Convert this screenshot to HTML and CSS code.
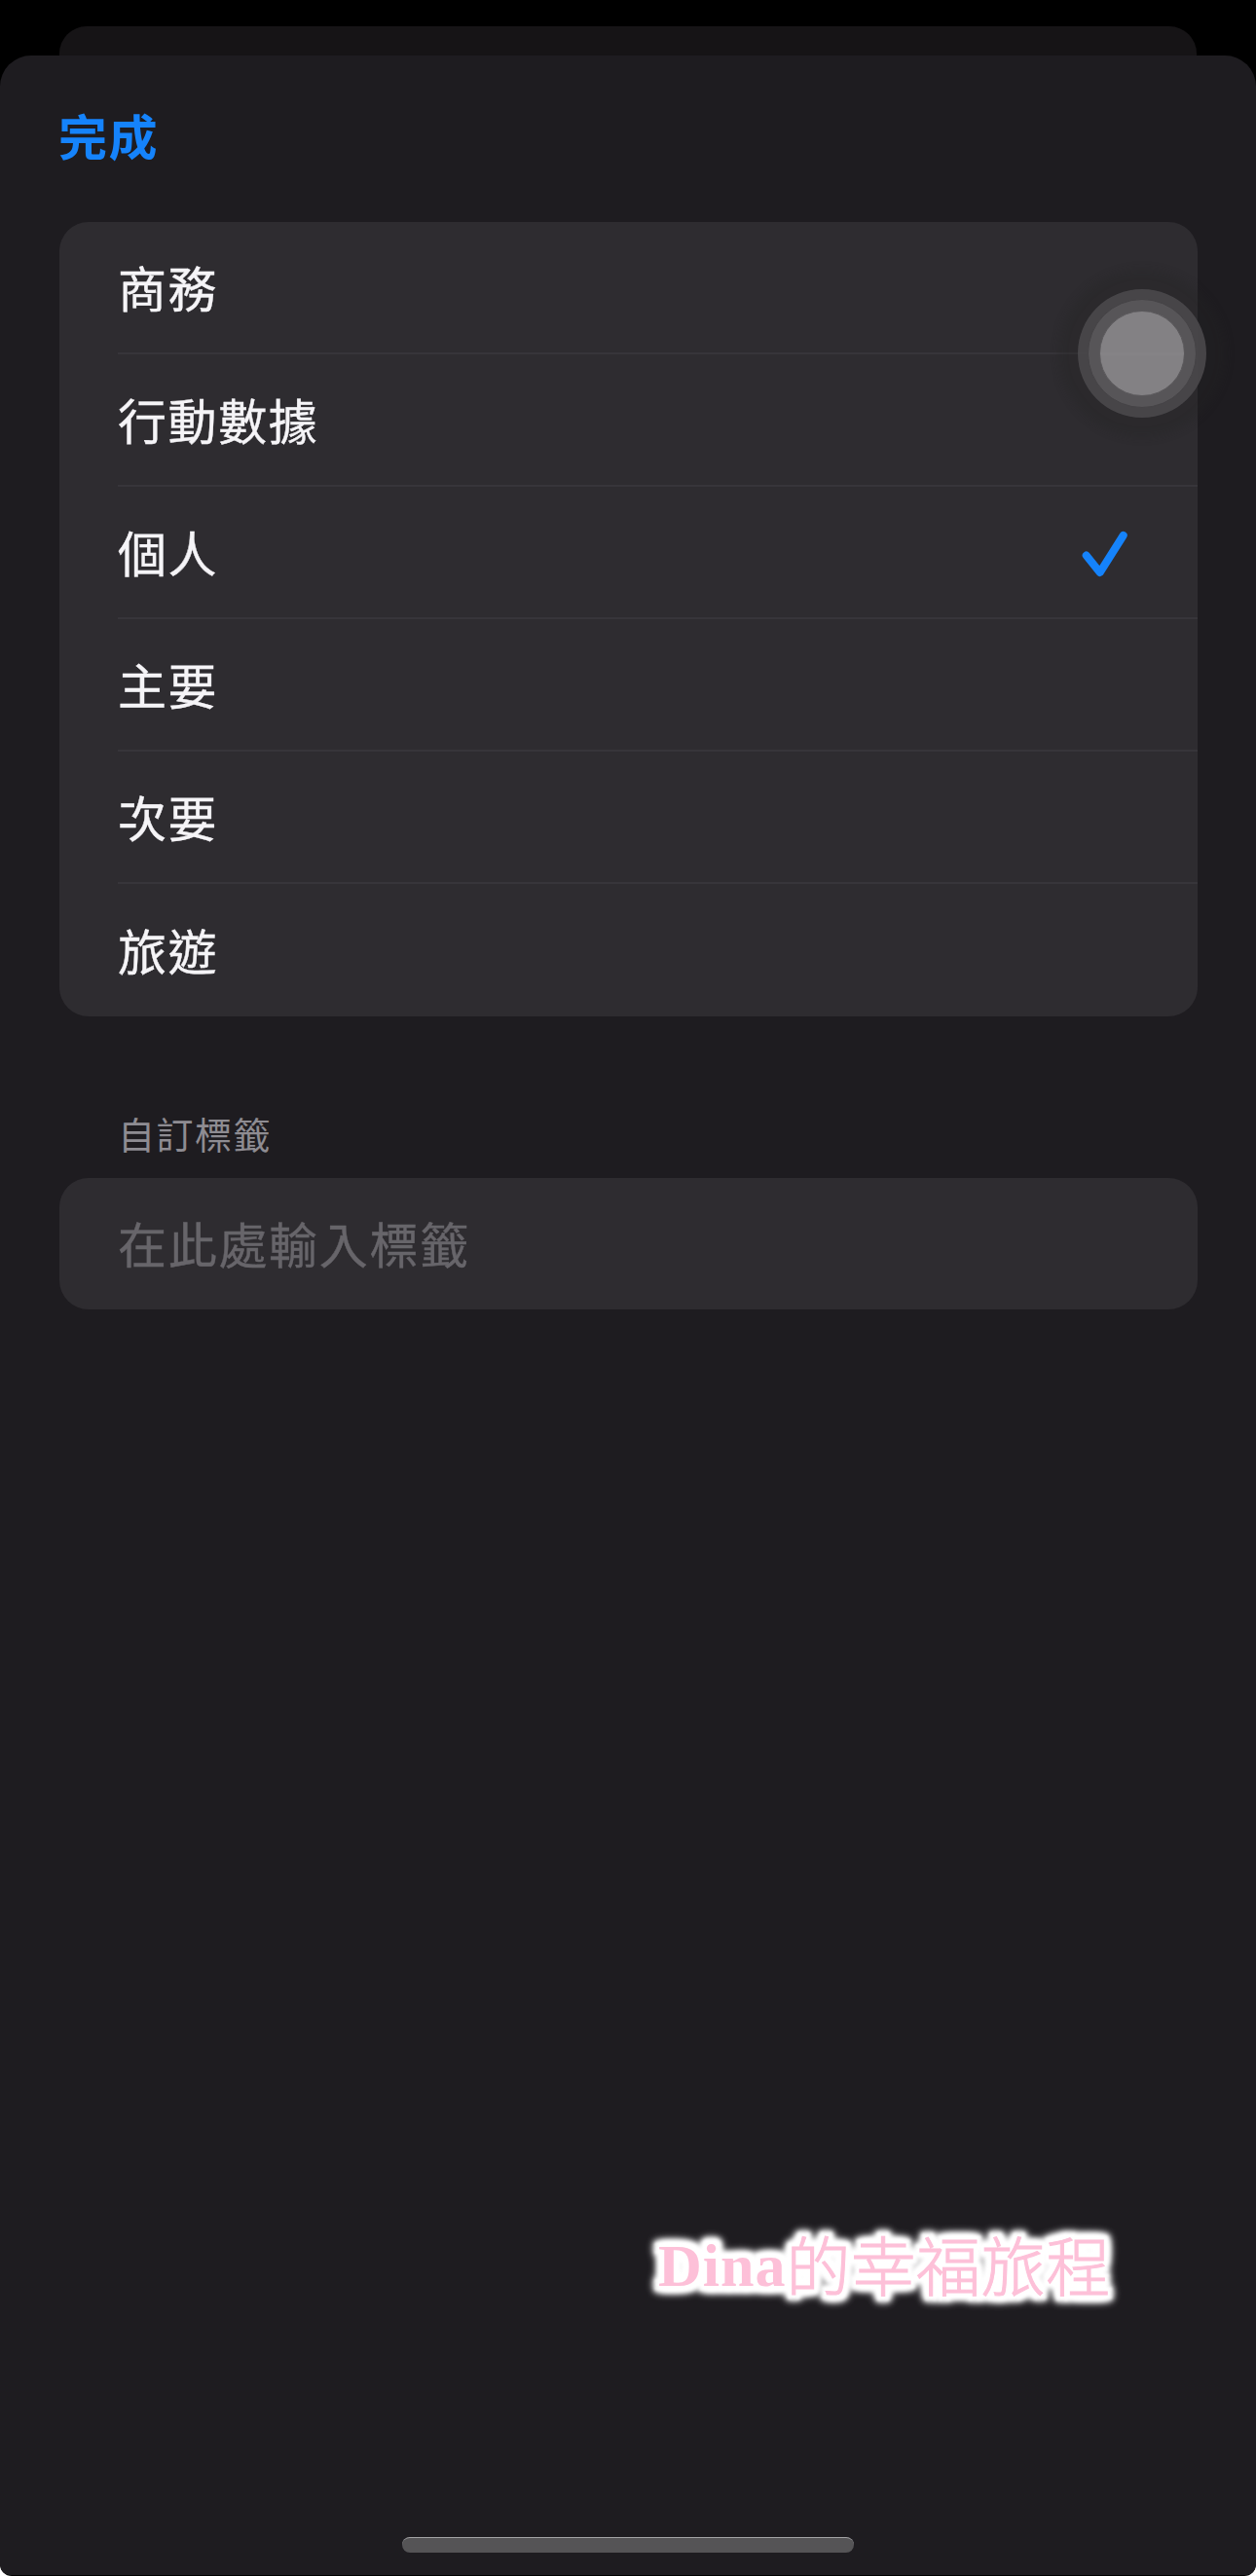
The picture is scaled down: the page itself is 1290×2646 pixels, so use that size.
FILE: index.html
```
<!DOCTYPE html>
<html lang="zh-Hant">
<head>
    <meta charset="UTF-8">
    <meta name="viewport" content="width=device-width, initial-scale=1.0">
    <title>標籤</title>
    <link rel="stylesheet" href="styles.css">
</head>
<body>
    <div class="screen">
        <div class="back-sheet"></div>
        <div class="sheet">
            <div class="nav"><a class="done">完成</a></div>
            <ul class="list">
                <li class="row"><span>商務</span></li>
                <li class="row"><span>行動數據</span></li>
                <li class="row">
                    <span>個人</span>
                    <svg class="check" width="50" height="50" viewBox="0 0 50 50">
                        <path d="M5.7 28.5 L19.7 46 L43.7 8"/>
                    </svg>
                </li>
                <li class="row"><span>主要</span></li>
                <li class="row"><span>次要</span></li>
                <li class="row"><span>旅遊</span></li>
            </ul>
            <div class="section-title">自訂標籤</div>
            <div class="field"><span>在此處輸入標籤</span></div>
        </div>

        <div class="touch">
            <div class="touch-ring"><div class="touch-dot"></div></div>
        </div>
        <div class="watermark"><b>Dina</b><span>的幸福旅程</span></div>
        <div class="home-bar"></div>
    </div>
</body>
</html>
```
FILE: styles.css
```
* {
    box-sizing: border-box;
}
body {
    margin: 0;
    background: #fff;
    font-family: "Noto Sans CJK TC", sans-serif;
}
.screen {
    position: relative;
    display: flex;
    flex-direction: column;
    width: 1290px;
    height: 2646px;
    padding-top: 27px;
    background: #000;
    border-radius: 0 0 12px 12px;
    overflow: hidden;
}
.back-sheet {
    height: 30px;
    margin: 0 61px;
    background: #161416;
    border-radius: 28px 28px 0 0;
}
.sheet {
    height: 2588px;
    background: #1e1c20;
    border-radius: 32px 32px 10px 10px;
}
.nav {
    display: flex;
    align-items: center;
    height: 171px;
    padding: 0 60px 10px;
}
.done {
    color: #1583fb;
    font-size: 50px;
    font-weight: 700;
    letter-spacing: 1.5px;
}
.list {
    margin: 0 60px 0 61px;
    padding: 0;
    list-style: none;
    background: #2e2c30;
    border-radius: 30px;
}
.row {
    display: flex;
    align-items: center;
    justify-content: space-between;
    height: 136px;
    margin-left: 60px;
    padding-right: 70px;
    border-bottom: 2px solid #37353a;
    color: #f5f4f7;
    font-size: 50px;
    letter-spacing: 1.6px;
}
.row span,
.field span {
    padding-bottom: 3px;
    -webkit-text-stroke: 0.4px;
}
.row:last-child {
    border-bottom: none;
}
.check {
    fill: none;
    stroke: #1583fb;
    stroke-width: 8;
    stroke-linecap: round;
    stroke-linejoin: round;
    overflow: visible;
}
.section-title {
    margin: 92px 0 18px 121px;
    color: #8e8c92;
    font-size: 38px;
    line-height: 56px;
    letter-spacing: 1.5px;
}
.field {
    display: flex;
    align-items: center;
    height: 135px;
    margin: 0 60px 0 61px;
    padding: 0 60px;
    background: #2e2c30;
    border-radius: 30px;
    color: #67656a;
    font-size: 50px;
    letter-spacing: 1.7px;
}
/* assistive touch button */
.touch {
    position: absolute;
    left: 1107px;
    top: 297px;
    display: flex;
    align-items: center;
    justify-content: center;
    width: 132px;
    height: 132px;
    border-radius: 50%;
    background: rgba(74, 72, 75, 0.92);
    box-shadow: 0 0 8px 20px rgba(38, 36, 36, 0.3);
}
.touch-ring {
    display: flex;
    align-items: center;
    justify-content: center;
    width: 112px;
    height: 112px;
    border: 1px solid #454346;
    border-radius: 50%;
    background: #575558;
}
.touch-dot {
    width: 88px;
    height: 88px;
    border: 1px solid #5c5a5d;
    border-radius: 50%;
    background: linear-gradient(#838184 49%, #858386 49%, #858386 52%, #838184 52%);
}
.watermark {
    position: absolute;
    left: 676px;
    top: 2279px;
    display: flex;
    align-items: baseline;
    line-height: 90px;
    color: #fdc0d8;
    white-space: nowrap;
    filter: drop-shadow(0 0 3px #fff) drop-shadow(0 0 3px #fff) drop-shadow(0 0 2px #fff);
    text-shadow: 3px 0 2px #fff, -3px 0 2px #fff, 0 3px 2px #fff, 0 -3px 2px #fff,
        4px 4px 3px #fff, -4px 4px 3px #fff, 4px -4px 3px #fff, -4px -4px 3px #fff;
}
.watermark b {
    margin-bottom: 5px;
    font-family: "Liberation Serif", serif;
    font-size: 62px;
    letter-spacing: 1px;
    transform: translateY(-5px);
}
.watermark span {
    font-size: 66px;
    font-weight: 300;
    letter-spacing: 0.7px;
    -webkit-text-stroke: 1px #fdc0d8;
}
.home-bar {
    position: absolute;
    left: 413px;
    top: 2606px;
    width: 464px;
    height: 16px;
    border-top: 1px solid #a4a4a6;
    border-radius: 8px;
    background: #555456;
}
```
